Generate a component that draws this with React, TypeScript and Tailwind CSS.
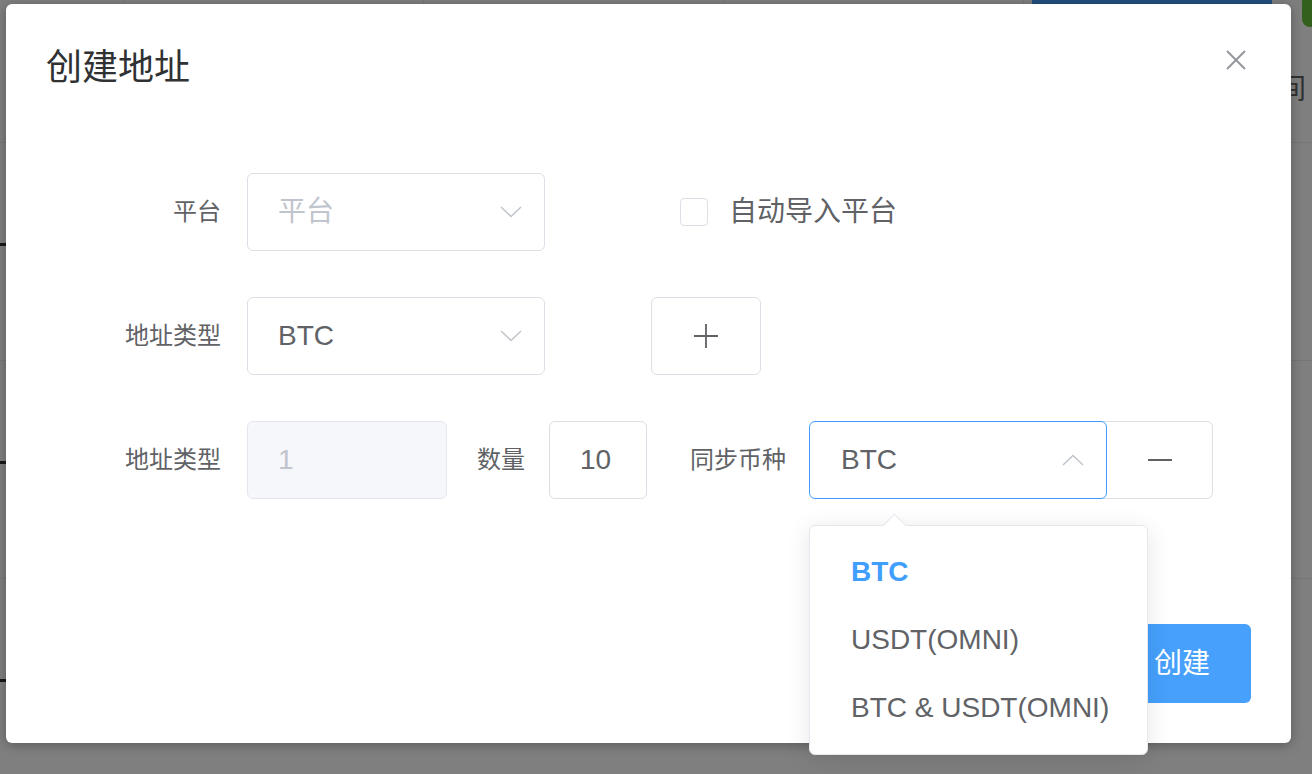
import { useState } from "react";

function Chevron({ up }: { up?: boolean }) {
  return (
    <svg width="22" height="12" viewBox="0 0 22 12" fill="none" className="text-[#c0c4cc]">
      {up ? (
        <polyline points="1,11 11,1.5 21,11" stroke="currentColor" strokeWidth="1.5" />
      ) : (
        <polyline points="1,1 11,10.5 21,1" stroke="currentColor" strokeWidth="1.5" />
      )}
    </svg>
  );
}

function BackgroundPage() {
  const rows = [0, 1, 2];
  return (
    <div className="flex h-full flex-col">
      <div className="flex h-[143px] shrink-0 border-b border-[#ebeef5]">
        <div className="w-[124px] border-r border-[#ebeef5]" />
        <div className="w-[300px] border-r border-[#ebeef5]" />
        <div className="w-[300px] border-r border-[#ebeef5]" />
        <div className="w-[300px] border-r border-[#ebeef5]" />
        <div className="flex flex-1 flex-col">
          <div className="flex">
            <div className="ml-[8px] h-[40px] w-[240px] rounded-b-[6px] bg-[#409eff]" />
            <div className="ml-auto h-[27px] w-[10px] rounded-bl-[8px] bg-[#67c23a]" />
          </div>
          <div className="mt-[36px] self-end pr-[6px] text-[28px] leading-none text-[#606266]">时间</div>
        </div>
      </div>
      {rows.map((r) => (
        <div key={r} className="flex h-[218px] shrink-0 items-start border-b border-[#ebeef5] pt-[100px]">
          <div className="h-[3px] w-[6px] bg-[#303133]" />
        </div>
      ))}
    </div>
  );
}

export default function App() {
  const [checked, setChecked] = useState(false);
  const options = ["BTC", "USDT(OMNI)", "BTC & USDT(OMNI)"];

  return (
    <div className="relative h-[774px] w-[1312px] overflow-hidden bg-white font-[family-name:'Helvetica_Neue',Helvetica,'Liberation_Sans','Noto_Sans_CJK_SC',sans-serif]">
      <BackgroundPage />
      <div className="absolute inset-0 bg-black/50" />

      {/* dialog */}
      <div className="absolute left-[6px] top-[4px] flex h-[739px] w-[1285px] flex-col rounded-[6px] bg-white shadow-[0_2px_12px_rgba(0,0,0,0.3)]">
        <div className="flex items-start justify-between pl-[40px] pr-[45px] pt-[40px]">
          <span className="text-[36px] leading-[48px] text-[#303133]">创建地址</span>
          <button className="mt-[6px] text-[#909399]">
            <svg width="20" height="20" viewBox="0 0 20 20">
              <path d="M1 1 L19 19 M19 1 L1 19" stroke="currentColor" strokeWidth="1.8" />
            </svg>
          </button>
        </div>

        <div className="mt-[81px] flex flex-col gap-[46px]">
          {/* row 1 */}
          <div className="flex h-[78px] items-center">
            <label className="w-[241px] pr-[26px] text-right text-[24px] text-[#606266]">平台</label>
            <div className="flex h-[78px] w-[298px] items-center justify-between rounded-[6px] border border-[#dcdfe6] pl-[30px] pr-[22px]">
              <span className="text-[28px] text-[#c0c4cc]">平台</span>
              <Chevron />
            </div>
            <div className="ml-[135px] flex items-center">
              <button
                onClick={() => setChecked(!checked)}
                className="h-[28px] w-[28px] rounded-[4px] border border-[#dcdfe6] bg-white"
              />
              <span className="ml-[21px] text-[28px] text-[#606266]">自动导入平台</span>
            </div>
          </div>

          {/* row 2 */}
          <div className="flex h-[78px] items-center">
            <label className="w-[241px] pr-[26px] text-right text-[24px] text-[#606266]">地址类型</label>
            <div className="flex h-[78px] w-[298px] items-center justify-between rounded-[6px] border border-[#dcdfe6] pl-[30px] pr-[22px]">
              <span className="text-[28px] text-[#606266]">BTC</span>
              <Chevron />
            </div>
            <button className="ml-[106px] flex h-[78px] w-[110px] items-center justify-center rounded-[6px] border border-[#dcdfe6] text-[#606266]">
              <svg width="24" height="24" viewBox="0 0 24 24">
                <path d="M12 0 V24 M0 12 H24" stroke="currentColor" strokeWidth="1.8" />
              </svg>
            </button>
          </div>

          {/* row 3 */}
          <div className="flex h-[78px] items-center">
            <label className="w-[241px] pr-[26px] text-right text-[24px] text-[#606266]">地址类型</label>
            <div className="flex h-[78px] w-[200px] items-center rounded-[6px] border border-[#e4e7ed] bg-[#f5f7fa] pl-[30px]">
              <span className="text-[28px] text-[#c0c4cc]">1</span>
            </div>
            <label className="ml-[30px] text-[24px] text-[#606266]">数量</label>
            <div className="ml-[24px] flex h-[78px] w-[98px] items-center rounded-[6px] border border-[#dcdfe6] pl-[30px]">
              <span className="text-[28px] text-[#606266]">10</span>
            </div>
            <label className="ml-[43px] text-[24px] text-[#606266]">同步币种</label>
            <div className="relative ml-[23px] flex">
              <div className="relative z-[1] flex h-[78px] w-[298px] items-center justify-between rounded-[6px] border border-[#409eff] bg-white pl-[31px] pr-[22px]">
                <span className="text-[28px] text-[#606266]">BTC</span>
                <Chevron up />
              </div>
              <button className="-ml-[6px] flex h-[78px] w-[112px] items-center justify-center rounded-r-[6px] border border-[#dcdfe6] pl-[6px] text-[#606266]">
                <svg width="24" height="4" viewBox="0 0 24 4">
                  <path d="M0 2 H24" stroke="currentColor" strokeWidth="2" />
                </svg>
              </button>

              {/* dropdown */}
              <div className="absolute left-0 top-[104px] z-20 w-[339px] rounded-[6px] border border-[#e4e7ed] bg-white py-[12px] shadow-[0_4px_24px_rgba(0,0,0,0.1)]">
                <div className="absolute -top-[9px] left-[76px] h-[17px] w-[17px] rotate-45 border-l border-t border-[#e4e7ed] bg-white" />
                {options.map((o, i) => (
                  <div
                    key={o}
                    className={
                      i === 0
                        ? "relative flex h-[68px] items-center pl-[41px] text-[28px] font-bold text-[#409eff]"
                        : "relative flex h-[68px] items-center pl-[41px] text-[28px] text-[#606266]"
                    }
                  >
                    {o}
                  </div>
                ))}
              </div>
            </div>
          </div>
        </div>

        <div className="mt-auto flex justify-end gap-[20px] pb-[40px] pr-[40px]">
          <button className="h-[79px] rounded-[6px] border border-[#dcdfe6] px-[40px] text-[28px] text-[#606266]">取消</button>
          <button className="h-[79px] rounded-[6px] bg-[#46a0fc] px-[41px] text-[28px] text-white">创建</button>
        </div>
      </div>
    </div>
  );
}
